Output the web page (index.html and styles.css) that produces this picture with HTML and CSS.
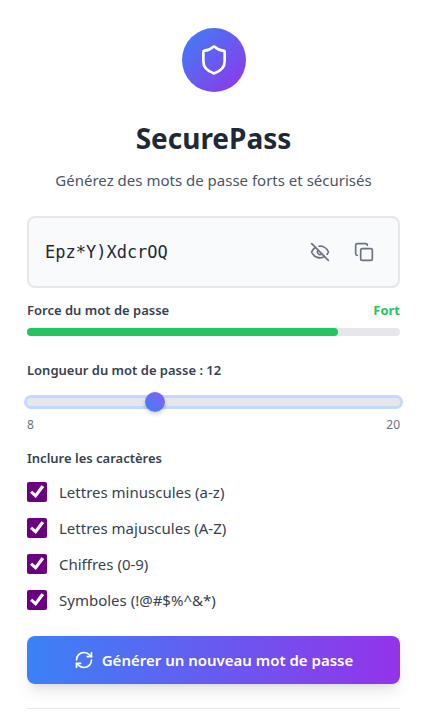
FILE: index.html
```html
<!DOCTYPE html>
<html lang="fr">
<head>
<meta charset="utf-8">
<meta name="viewport" content="width=device-width, initial-scale=1">
<title>SecurePass</title>
<link rel="stylesheet" href="styles.css">
</head>
<body>
<main class="card">
  <header class="header">
    <div class="logo">
      <svg viewBox="0 0 24 24" width="32" height="32" class="icon" aria-hidden="true"><path d="M20 13c0 5-3.500 7.500-7.660 8.950a1 1 0 0 1-.67-.01C7.500 20.500 4 18 4 13V6a1 1 0 0 1 1-1c2 0 4.500-1.200 6.240-2.720a1.170 1.170 0 0 1 1.520 0C14.510 3.810 17 5 19 5a1 1 0 0 1 1 1z"/></svg>
    </div>
    <h1 class="title">SecurePass</h1>
    <p class="subtitle">Générez des mots de passe forts et sécurisés</p>
  </header>

  <div class="password">
    <output class="value">Epz*Y)XdcrOQ</output>
    <button type="button" class="tool" aria-label="Masquer">
      <svg viewBox="0 0 24 24" width="20" height="20" class="icon" aria-hidden="true"><path d="M10.733 5.076a10.744 10.744 0 0 1 11.205 6.575 1 1 0 0 1 0 .696 10.747 10.747 0 0 1-1.444 2.490"/><path d="M14.084 14.158a3 3 0 0 1-4.242-4.242"/><path d="M17.479 17.499a10.750 10.750 0 0 1-15.417-5.151 1 1 0 0 1 0-.696 10.750 10.750 0 0 1 4.446-5.143"/><path d="m2 2 20 20"/></svg>
    </button>
    <button type="button" class="tool" aria-label="Copier">
      <svg viewBox="0 0 24 24" width="20" height="20" class="icon" aria-hidden="true"><rect x="8" y="8" width="14" height="14" rx="2"/><path d="M4 16c-1.100 0-2-.9-2-2V4c0-1.100.9-2 2-2h10c1.100 0 2 .9 2 2"/></svg>
    </button>
  </div>

  <section class="strength">
    <div class="row label"><span>Force du mot de passe</span><span class="level">Fort</span></div>
    <div class="bar"><div class="fill"></div></div>
  </section>

  <section class="length">
    <label class="label" for="length">Longueur du mot de passe : 12</label>
    <input class="slider" id="length" type="range" min="8" max="20" value="12">
    <div class="row limits"><span>8</span><span>20</span></div>
  </section>

  <fieldset class="options">
    <legend class="label">Inclure les caractères</legend>
    <label class="option"><input type="checkbox" checked>Lettres minuscules (a-z)</label>
    <label class="option"><input type="checkbox" checked>Lettres majuscules (A-Z)</label>
    <label class="option"><input type="checkbox" checked>Chiffres (0-9)</label>
    <label class="option"><input type="checkbox" checked>Symboles (!@#$%^&amp;*)</label>
  </fieldset>

  <button type="button" class="generate">
    <svg viewBox="0 0 24 24" width="20" height="20" class="icon" aria-hidden="true"><path d="M3 12a9 9 0 0 1 9-9 9.750 9.750 0 0 1 6.740 2.740L21 8"/><path d="M21 3v5h-5"/><path d="M21 12a9 9 0 0 1-9 9 9.750 9.750 0 0 1-6.740-2.740L3 16"/><path d="M8 16H3v5"/></svg>
    Générer un nouveau mot de passe
  </button>
  <hr class="rule">
</main>
</body>
</html>
```

FILE: styles.css
```css
* {
  box-sizing: border-box;
}

body {
  margin: 0;
  background: #fff;
  color: #374151;
  font: 15px/24px "Segoe UI", "Noto Sans", sans-serif;
}

.card {
  padding: 28px 27px 18px;
}

.icon {
  display: block;
  flex: none;
  fill: none;
  stroke: currentColor;
  stroke-width: 2;
  stroke-linecap: round;
  stroke-linejoin: round;
}

.header {
  display: flex;
  flex-direction: column;
  align-items: center;
  text-align: center;
}

.logo {
  display: grid;
  place-items: center;
  width: 64px;
  height: 64px;
  border-radius: 50%;
  color: #fff;
  background: linear-gradient(135deg, #3b82f6, #9333ea);
}

.title {
  margin: 28px 0 12px;
  color: #1f2937;
  font-size: 28px;
  line-height: 36px;
}

.subtitle {
  margin: 0;
  color: #4b5563;
}

.password {
  display: flex;
  align-items: center;
  gap: 8px;
  height: 72px;
  margin-top: 24px;
  padding: 0 16px;
  border: 2px solid #e5e7eb;
  border-radius: 8px;
  background: #f9fafb;
}

.value {
  flex: 1;
  color: #1f2937;
  font: 17px/28px "DejaVu Sans Mono", monospace;
}

.tool {
  padding: 8px;
  border: 0;
  color: #6b7280;
  background: none;
}

.row {
  display: flex;
  justify-content: space-between;
}

.label {
  padding: 0;
  font-size: 13px;
  font-weight: 600;
  line-height: 20px;
}

.strength {
  margin-top: 12px;
}

.level {
  color: #22c55e;
  font-weight: 700;
}

.bar {
  height: 8px;
  margin-top: 8px;
  border-radius: 4px;
  background: #e5e7eb;
}

.fill {
  width: 83.3333%;
  height: 100%;
  border-radius: inherit;
  background: #22c55e;
}

.length {
  margin-top: 24px;
}

.length .label {
  display: block;
}

.slider {
  display: block;
  width: 100%;
  height: 8px;
  margin: 18px 0 11px;
  border-radius: 4px;
  appearance: none;
  background: #e5e7eb;
  box-shadow: 0 0 0 3px #c4d9fd;
}

.slider::-webkit-slider-thumb {
  width: 20px;
  height: 20px;
  border-radius: 50%;
  appearance: none;
  background: linear-gradient(45deg, #3b82f6, #8b5cf6);
  box-shadow: 0 2px 4px rgb(0 0 0 / 20%);
}

.limits {
  color: #6b7280;
  font-size: 12px;
  line-height: 16px;
}

.options {
  display: grid;
  gap: 12px;
  margin: 15px 0 24px;
  padding: 0;
  border: 0;
}

.options .label {
  margin-bottom: 12px;
}

.option {
  display: flex;
  align-items: center;
  gap: 12px;
}

.option input {
  width: 20px;
  height: 20px;
  margin: 0;
  border: 1px solid #6b0080;
  border-radius: 2px;
  appearance: none;
}

.option input:checked {
  border: 0;
  background: #6b0080;
}

.option input:checked::before {
  content: "";
  display: block;
  height: 100%;
  background: #fff;
  clip-path: polygon(15% 54%, 26% 44%, 42% 58%, 72% 16%, 86% 25%, 44% 80%);
}

.generate {
  display: flex;
  align-items: center;
  justify-content: center;
  gap: 8px;
  width: 100%;
  height: 48px;
  border: 0;
  border-radius: 8px;
  color: #fff;
  background: linear-gradient(90deg, #3b82f6, #9333ea);
  box-shadow: 0 10px 15px -3px rgb(0 0 0 / 10%), 0 4px 6px -4px rgb(0 0 0 / 10%);
  font: inherit;
  font-weight: 600;
}

.rule {
  margin: 24px 0 0;
  border: 0;
  border-top: 1px solid #e5e7eb;
}
```
